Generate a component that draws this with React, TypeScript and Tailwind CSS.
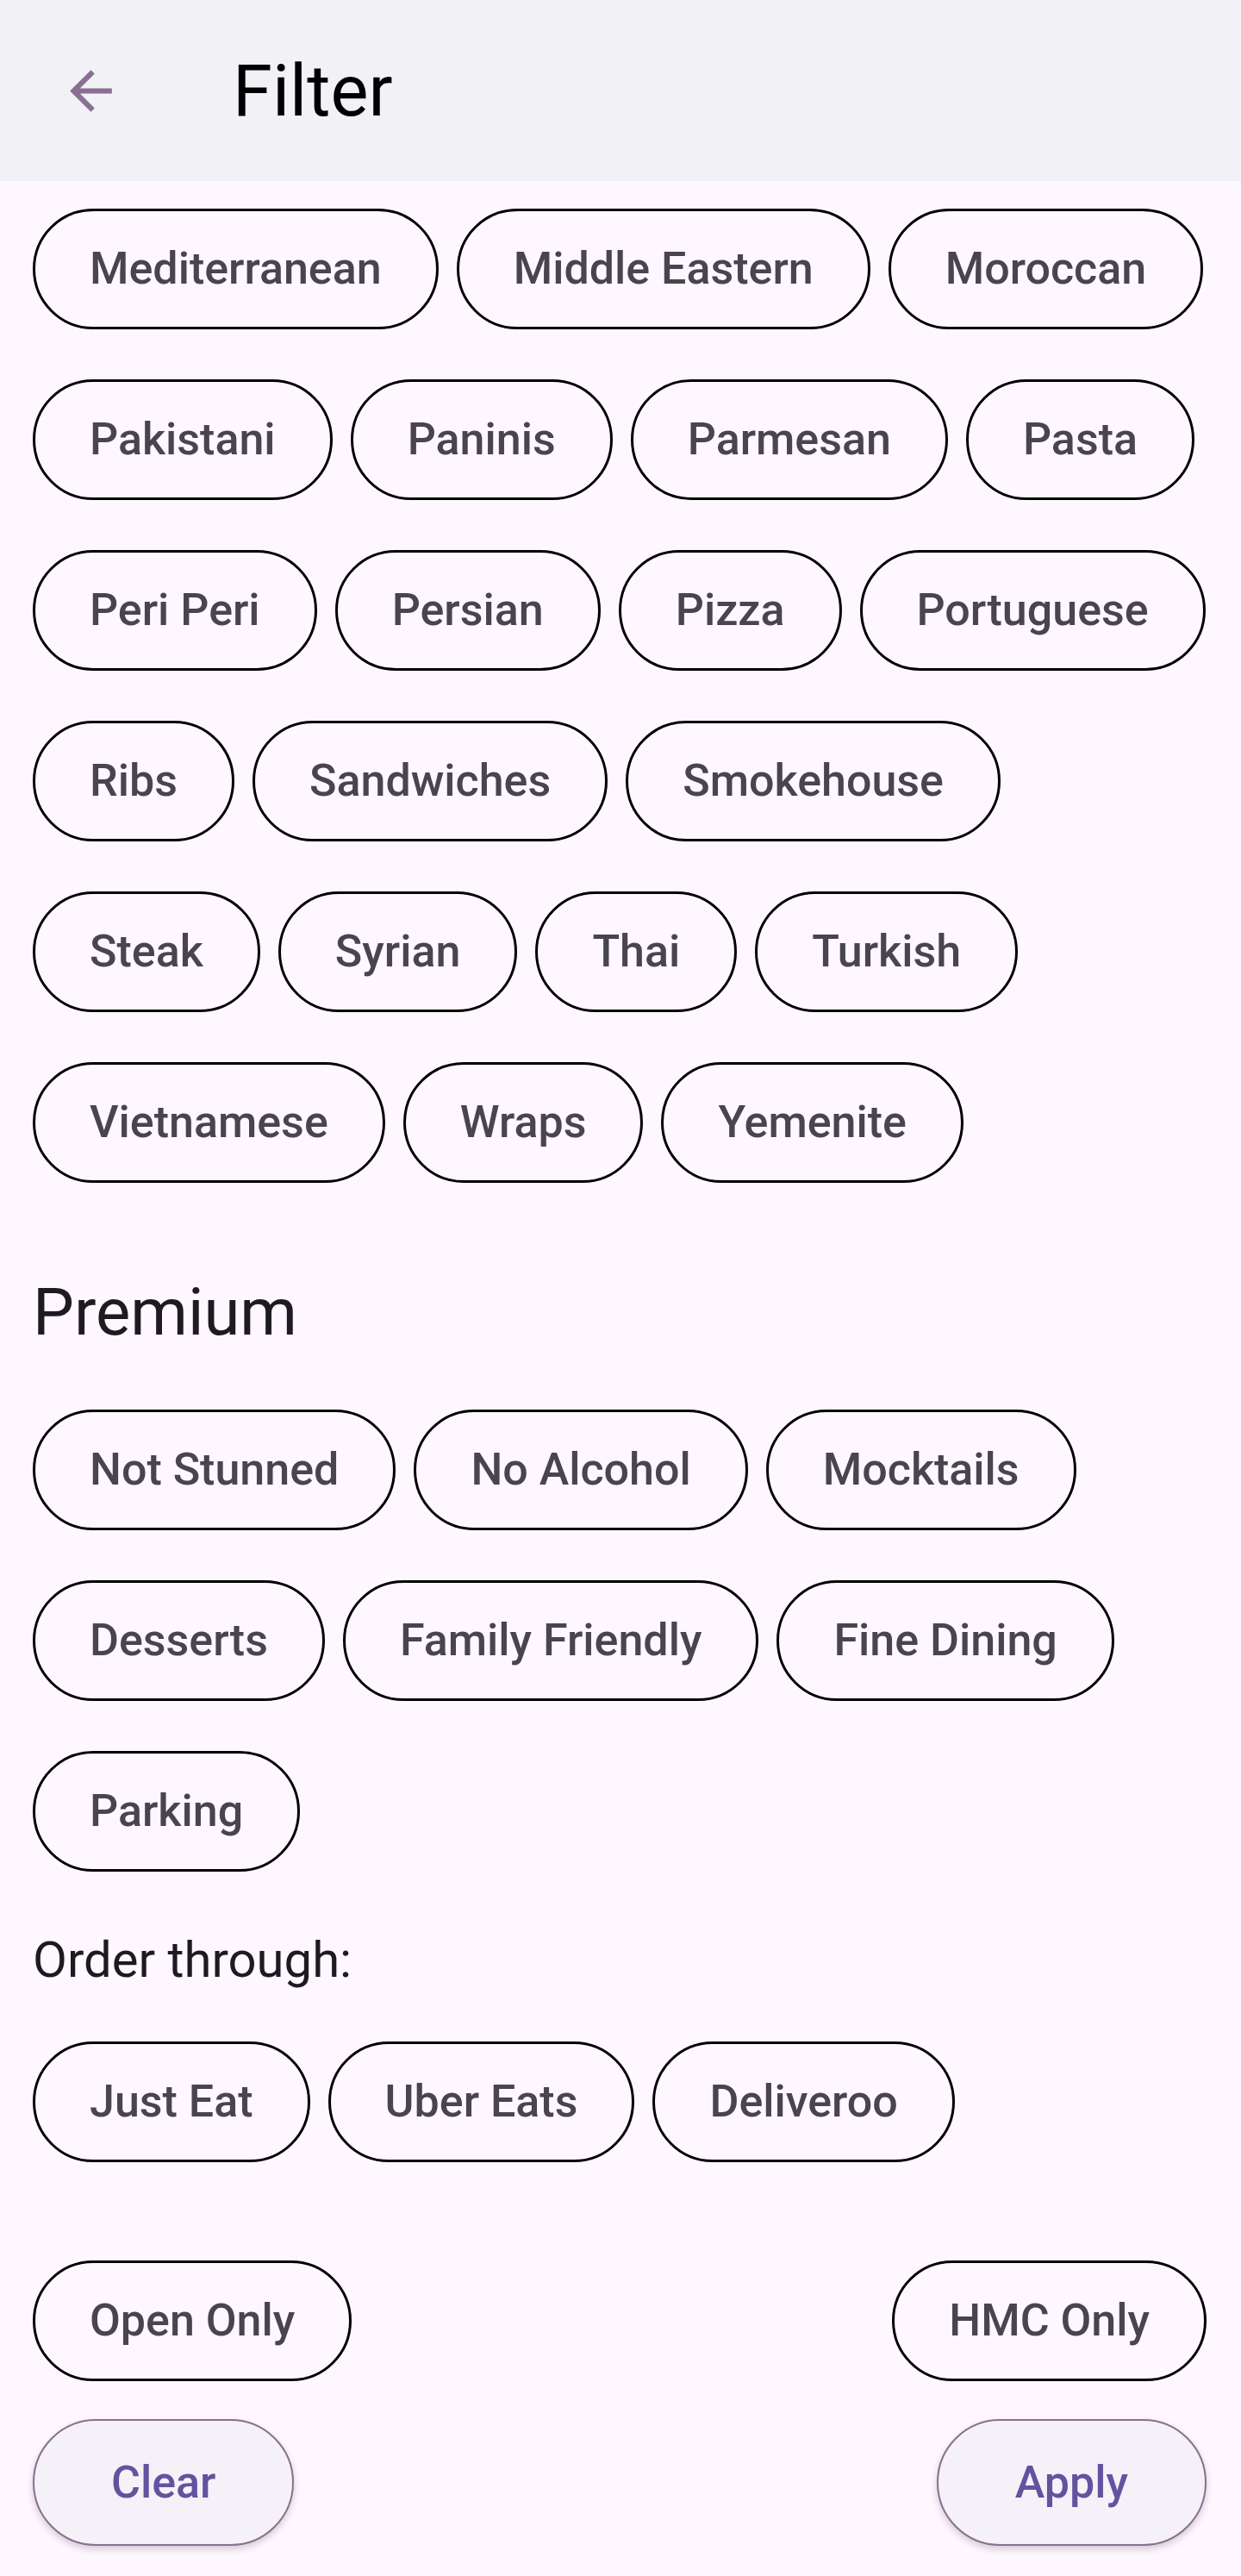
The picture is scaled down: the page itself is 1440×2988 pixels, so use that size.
import React from 'react';

const cuisineRows = [
  ['Mediterranean', 'Middle Eastern', 'Moroccan'],
  ['Pakistani', 'Paninis', 'Parmesan', 'Pasta'],
  ['Peri Peri', 'Persian', 'Pizza', 'Portuguese'],
  ['Ribs', 'Sandwiches', 'Smokehouse'],
  ['Steak', 'Syrian', 'Thai', 'Turkish'],
  ['Vietnamese', 'Wraps', 'Yemenite'],
];

const premiumRows = [
  ['Not Stunned', 'No Alcohol', 'Mocktails'],
  ['Desserts', 'Family Friendly', 'Fine Dining'],
  ['Parking'],
];

const orderOptions = ['Just Eat', 'Uber Eats', 'Deliveroo'];

const Chip = ({ label }: { label: string }) => (
  <button className="flex h-[140px] shrink-0 items-center whitespace-nowrap rounded-full border-[3px] border-black bg-transparent px-[63px] text-[52px] font-medium leading-none text-[#49454f]">
    {label}
  </button>
);

const ChipRows = ({ rows }: { rows: string[][] }) => (
  <div className="flex flex-col gap-y-[58px]">
    {rows.map((row, i) => (
      <div key={i} className="flex gap-x-[21px]">
        {row.map((label) => (
          <Chip key={label} label={label} />
        ))}
      </div>
    ))}
  </div>
);

const ActionButton = ({ label }: { label: string }) => (
  <button className="flex h-[147px] shrink-0 items-center whitespace-nowrap rounded-full border-2 border-[#8b6f90] bg-[#f5f1f8] px-[89px] text-[52px] font-medium leading-none text-[#63539f] shadow-[0_4px_8px_rgba(0,0,0,0.18)]">
    {label}
  </button>
);

const App = () => {
  return (
    <div className="min-h-[2988px] bg-[#fef7ff] font-['Roboto',sans-serif]">
      {/* Top bar */}
      <header className="flex h-[210px] items-center bg-[#f2f1f6]">
        <button className="ml-[69px] flex h-[73px] w-[73px] items-center justify-center">
          <svg viewBox="0 0 24 24" className="h-[73px] w-[73px]" fill="#8a6f92">
            <path d="M20 11H7.83l5.59-5.59L12 4l-8 8 8 8 1.41-1.41L7.83 13H20v-2z" />
          </svg>
        </button>
        <h1 className="ml-[128px] text-[83px] leading-none text-black">Filter</h1>
      </header>

      <main className="pl-[38px] pr-[40px] pt-[32px]">
        <ChipRows rows={cuisineRows} />

        <h2 className="mt-[112px] text-[76px] leading-none text-[#1d1b20]">Premium</h2>
        <div className="mt-[75px]">
          <ChipRows rows={premiumRows} />
        </div>

        <p className="mt-[73px] text-[58px] leading-none text-[#1d1b20]">Order through:</p>
        <div className="mt-[66px] flex gap-x-[21px]">
          {orderOptions.map((label) => (
            <Chip key={label} label={label} />
          ))}
        </div>

        <div className="mt-[114px] flex justify-between">
          <Chip label="Open Only" />
          <Chip label="HMC Only" />
        </div>

        <div className="mt-[44px] flex justify-between">
          <ActionButton label="Clear" />
          <ActionButton label="Apply" />
        </div>
      </main>
    </div>
  );
};

export default App;
